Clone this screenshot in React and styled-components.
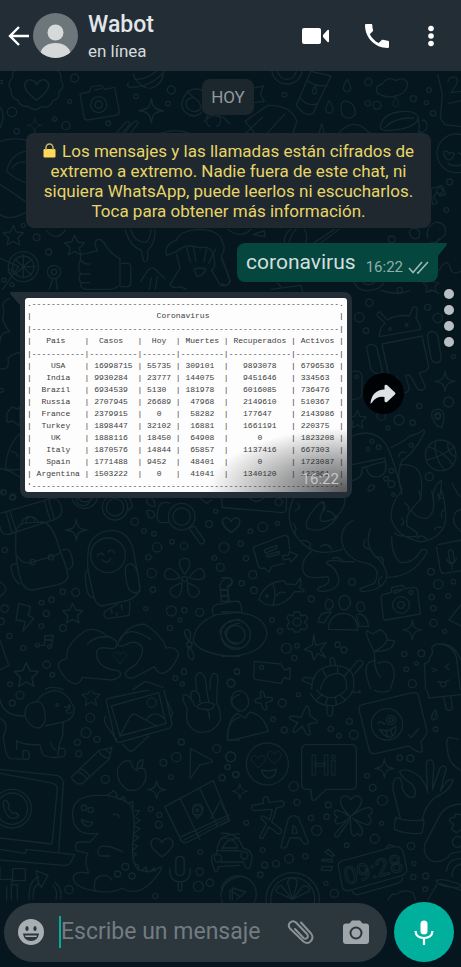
import React from "react";
import styled, { createGlobalStyle } from "styled-components";

const GlobalStyle = createGlobalStyle`
  * { box-sizing: border-box; }
  body { margin: 0; background: #05161e; font-family: Roboto, "Noto Sans", sans-serif; }
  button { border: 0; padding: 0; background: none; color: inherit; font: inherit; cursor: pointer; }
`;

const Page = styled.div`
  position: relative;
  min-height: 100vh;
  display: flex;
  flex-direction: column;
  overflow: hidden;
  background: #05161e;
`;

const Wallpaper = styled.svg`
  position: absolute;
  inset: 0;
  width: 100%;
  height: 100%;
  fill: none;
  stroke: #14272f;
  stroke-width: 4;
  stroke-linecap: round;
  stroke-linejoin: round;
  font-family: Roboto, sans-serif;
`;

const Header = styled.header`
  position: relative;
  display: flex;
  align-items: center;
  height: 71px;
  padding: 0 20px 0 6px;
  background: #222d36;
  color: #ffffff;
`;

const IconButton = styled.button`
  display: flex;
  align-items: center;
  justify-content: center;
  flex: none;
  width: ${(p) => p.$width}px;
  height: 40px;
  color: ${(p) => p.$color || "#ffffff"};
`;

const Avatar = styled.svg`
  flex: none;
  width: 45px;
  height: 45px;
  margin: 0 10px 0 3px;
`;

const Contact = styled.div`
  flex: 1;
  min-width: 0;
  padding-top: 3px;
`;

const Name = styled.h1`
  margin: 0;
  color: #e3e6e8;
  font-size: 23px;
  line-height: 28px;
  font-weight: 500;
`;

const Status = styled.p`
  margin: 0;
  color: #d5dadd;
  font-size: 17px;
  line-height: 24px;
`;

const HeaderActions = styled.div`
  display: flex;
  align-items: center;
  gap: 32px;
`;

const Chat = styled.main`
  position: relative;
  flex: 1;
  display: flex;
  flex-direction: column;
  padding: 8px 7px 0 11px;
`;

const DatePill = styled.div`
  align-self: center;
  margin-right: 9px;
  padding: 8px 9px;
  border-radius: 8px;
  background: #1c272d;
  color: #919a9f;
  font-size: 17px;
  line-height: 20px;
`;

const Notice = styled.p`
  margin: 18px 23px 0 15px;
  padding: 8px 14px 7px;
  border-radius: 8px;
  background: #1e282e;
  color: #e8d568;
  font-size: 17px;
  line-height: 20px;
  text-align: center;
`;

const LockIcon = styled.svg`
  width: 13px;
  height: 15px;
  margin-right: 2px;
  vertical-align: -1px;
`;

const SentBubble = styled.div`
  position: relative;
  align-self: flex-end;
  display: flex;
  align-items: flex-end;
  gap: 10px;
  margin: 15px 16px 0 0;
  padding: 5px 9px 6px;
  border-radius: 8px 0 8px 8px;
  background: #05473f;
  color: #d3dfdd;
  font-size: 21px;
  line-height: 28px;
`;

const SentTail = styled.svg`
  position: absolute;
  top: 0;
  left: 100%;
  width: 9px;
  height: 13px;
`;

const Meta = styled.span`
  display: flex;
  align-items: center;
  gap: 5px;
  color: #8fafaa;
  font-size: 15px;
  line-height: 18px;
`;

const MediaRow = styled.div`
  display: flex;
  align-items: flex-start;
  margin-top: 7px;
`;

const MediaBubble = styled.div`
  position: relative;
  flex: none;
  margin: 3px 0 0 9px;
  padding: 6px 5px;
  border-radius: 0 8px 8px 8px;
  background: #222d36;
`;

const ReceivedTail = styled.svg`
  position: absolute;
  top: 0;
  right: 100%;
  width: 10px;
  height: 13px;
`;

const Sheet = styled.div`
  position: relative;
  padding: 0 3px 0 2px;
  border-radius: 3px;
  background: #fdfdfd;
  overflow: hidden;

  &::after {
    content: "";
    position: absolute;
    inset: 0;
    background: radial-gradient(ellipse 140px 64px at 100% 100%, rgba(30, 32, 34, 0.75), rgba(30, 32, 34, 0.4) 50%, rgba(30, 32, 34, 0));
  }
`;

const Report = styled.table`
  border-collapse: collapse;
  color: #3c3c3c;
  font-family: "Liberation Mono", monospace;
  font-size: 8px;
  line-height: 12px;
  white-space: pre;

  th, td {
    padding: 0;
    height: 12px;
    font-weight: 400;
    text-align: left;
  }
`;

const RuleCell = styled.td`
  line-height: 13px;
`;

const MediaTime = styled.time`
  position: absolute;
  z-index: 1;
  right: 8px;
  bottom: 3px;
  color: #c4c6c8;
  font-size: 15px;
  line-height: 20px;
`;

const ShareButton = styled.button`
  align-self: center;
  display: flex;
  align-items: center;
  justify-content: center;
  flex: none;
  width: 41px;
  height: 41px;
  margin-left: 11px;
  border-radius: 50%;
  background: #000305;
`;

const DotColumn = styled.div`
  display: flex;
  flex-direction: column;
  gap: 6px;
  margin-left: auto;
`;

const Dot = styled.span`
  width: 10px;
  height: 10px;
  border-radius: 50%;
  background: #b9bec1;
`;

const Composer = styled.form`
  position: relative;
  display: flex;
  align-items: center;
  gap: 7px;
  padding: 0 7px 5px 4px;
`;

const Field = styled.div`
  flex: 1;
  min-width: 0;
  display: flex;
  align-items: center;
  height: 59px;
  padding: 0 17px 0 13px;
  border-radius: 30px;
  background: #2c363d;
`;

const MessageInput = styled.input`
  flex: 1;
  min-width: 0;
  height: 32px;
  margin-left: 14px;
  padding: 0;
  border: 0;
  border-left: 2px solid #0aa897;
  outline: 0;
  background: transparent;
  color: #d5dadd;
  font: 23px/32px Roboto, sans-serif;

  &::placeholder { color: #737c81; opacity: 1; }
`;

const FieldActions = styled.div`
  display: flex;
  gap: 28px;
`;

const MicButton = styled.button`
  display: flex;
  align-items: center;
  justify-content: center;
  flex: none;
  width: 60px;
  height: 60px;
  border-radius: 50%;
  background: #00af9c;
`;

const HEART = "M0 26C-30 4-34-8-28-18C-21-29-6-26 0-12C6-26 21-29 28-18C34-8 30 4 0 26Z";
const STAR = "M0-30L9-10L30-8L14 8L19 29L0 18L-19 29L-14 8L-30-8L-9-10Z";
const SPARK = "M0-32C3-9 9-3 32 0C9 3 3 9 0 32C-3 9-9 3-32 0C-9-3-3-9 0-32Z";
const DROP = "M0-22C10-6 14 2 12 10C8 22-8 22-12 10C-14 2-10-6 0-22Z";
const MIC = "M-12-38Q-12-50 0-50Q12-50 12-38V-8Q12 4 0 4Q-12 4-12-8ZM-30-16Q-30 22 0 22Q30 22 30-16M-5 22V46Q0 50 5 46V22";
const PETAL = "M0-14C-24-46-18-62 0-62C18-62 24-46 0-14";

/* Each tile is drawn on a grid three times finer than the page. */
const tiles = [
  {
    x: 0, y: 68,
    circles: [[36, 132, 14], [224, 30, 12], [209, 100, 6], [164, 153, 6], [198, 173, 12], [50, 190, 8], [325, 166, 7], [408, 85, 7], [514, 66, 12], [504, 107, 7], [296, 110, 24], [296, 110, 11], [110, 508, 10], [146, 552, 9], [70, 596, 45], [70, 596, 32], [162, 612, 20], [162, 612, 8], [30, 610, 6], [12, 636, 6], [36, 650, 6], [3, 42, 5], [70, 472, 6]],
    paths: [
      "M38 28Q18 50 34 66Q30 90 54 96Q60 118 84 114Q102 134 124 116Q150 122 158 98Q180 94 176 72Q198 56 182 36Q188 14 166 4M38 28Q34 10 52 2",
      "M240 78L268 72L274 56L304 52L314 64L344 58L358 132Q356 140 346 142L262 156Q254 156 252 148ZM284 66L304 62",
      "M386 44Q376 52 390 58Q450 58 488 16Q496 6 484 2M400 18Q410 50 440 60M404 34Q440 36 474 6M490 16Q488 50 450 62",
      "M545 110C550 80 566 58 600 64C630 78 620 140 584 144Q550 142 545 110M560 70L580 88Q600 98 604 120Q580 144 560 116Q552 92 580 88",
      "M348 196L378 162Q388 158 390 168L366 196M374 196L402 160Q412 156 414 166L392 196",
      "M480 196Q530 180 570 196M612 160L636 142L670 148L690 168M630 176A22 22 0 1 1 650 176",
      "M0 118Q18 140 0 180M0 220Q40 208 76 216M76 250Q30 260 20 310Q40 330 76 344M0 350Q36 372 76 400M0 440Q30 460 76 434M36 300Q50 280 74 282",
      "M242 574Q236 556 262 556L292 548Q282 530 288 518Q300 508 312 524Q328 556 360 572V650Q350 662 330 664H256Q238 660 244 644Q230 632 242 618Q230 600 242 574ZM242 618H270M244 644H270M242 574Q250 590 270 588M366 586H384Q392 588 392 598V646Q390 656 380 656H362",
      "M376 486Q390 536 424 546L430 578Q436 586 442 576L444 546Q468 524 464 486M392 486Q406 526 440 522Q454 504 452 486",
      "M422 640L444 606Q460 594 470 608L494 632M448 664L454 630M466 664L472 626",
      "M500 562Q490 530 530 516Q540 488 596 484Q660 486 666 520Q680 540 664 564L690 640Q680 660 660 650L634 606Q650 600 640 560Q630 530 600 540Q560 524 530 550L500 562M530 560L540 600L510 650Q520 664 540 656L560 664M560 540L572 584M580 536L588 580M620 540L612 580M646 544L626 586M582 604Q600 596 618 604Q606 628 590 624Z",
      "M0 570L56 596L8 664M70 596V560M70 596L96 572M70 596L106 596M70 596L94 622M70 596V630M70 596L44 620M70 596L44 572M148 664L158 634M172 664L168 634",
      "M140 488Q170 524 196 486",
    ],
    marks: [[HEART, 110, 65, 1.2], [SPARK, 104, 172, 0.7], [SPARK, 454, 128, 1.15], [STAR, 40, 502, 1], [STAR, 224, 532, 1]],
  },
  {
    x: 221, y: 68,
    circles: [[190, 80, 7], [442, 42, 11], [440, 106, 8], [468, 112, 12], [577, 92, 9], [636, 136, 8], [624, 66, 7], [616, 104, 6], [198, 6, 28], [198, 2, 46], [686, 342, 9], [656, 368, 9], [676, 426, 7], [512, 514, 10], [536, 666, 8], [706, 256, 58]],
    paths: [
      "M98 60L128 54L118 78L130 100L98 104",
      "M270 10L330 24L276 136Q250 148 226 112ZM262 40Q290 58 318 52M240 92Q260 116 286 108M282 54Q268 72 278 78Q294 76 282 54",
      "M470 76Q458 54 484 48Q500 22 526 38Q552 24 560 48Q556 78 524 84Q500 92 470 76",
      "M360 120Q358 96 380 100Q406 110 402 140Q384 160 364 142Z",
      "M100 194L72 160L140 112Q210 110 228 160L216 196M74 196L124 148M138 196L190 140",
      "M352 196Q400 142 446 196M294 196L302 166L310 196",
      "M478 180Q480 142 530 132Q584 124 592 148Q590 170 546 182Q490 194 478 180ZM492 178Q520 148 578 150M592 150L596 194M604 156Q620 156 618 180Q606 200 590 190",
      "M650 20L664 78L658 150L672 170L720 176M680 42Q684 24 706 28Q716 40 690 74L720 70M720 98L684 106",
      "M668 252Q680 244 684 258Q692 248 700 258Q696 276 680 276Q668 266 668 252M712 252L720 260M680 286Q700 298 720 290",
      "M630 362L662 352L674 378L656 384L648 372L638 388L650 404L634 410Z",
      "M190 524Q190 494 210 484M204 524Q210 500 226 484M254 524Q262 500 250 484M280 524L340 484M300 524L354 484M20 484Q60 514 90 484M96 500L130 488L132 506Z",
      "M566 500Q560 484 582 480Q602 486 594 508Q580 520 566 500M620 510Q612 476 646 462Q680 466 672 500Q650 526 630 524M646 526L654 510",
      "M654 608Q680 560 690 608Q700 620 720 610",
      "M150 664L240 652L246 672M170 646L180 656M400 644Q410 668 440 668Q480 664 488 644M428 644Q440 656 460 644",
      "M0 570Q16 600 28 640Q20 660 0 646",
    ],
    marks: [[DROP, 378, 54, 0.9], [DROP, 325, 118, 0.9], [DROP, 524, 104, 0.7], [STAR, 630, 650, 0.8]],
  },
  {
    x: 0, y: 285,
    circles: [[4, 316, 6], [10, 622, 8], [38, 636, 9], [250, 640, 22]],
    paths: [
      "M30 40Q0 50 12 80Q0 110 30 140Q0 140 0 170M0 250Q30 260 24 220Q44 200 68 204",
      "M20 386L36 366L54 372L60 364V424L38 408L22 412Z",
      "M66 440Q20 480 16 550Q36 560 66 550M0 550L32 560L66 580M34 500Q50 500 54 516",
    ],
    marks: [],
  },
  {
    x: 340, y: 290,
    circles: [[88, 38, 11], [58, 82, 14], [78, 122, 8], [263, 52, 9], [293, 84, 14], [150, 117, 4], [200, 105, 4], [238, 348, 8], [177, 390, 15], [218, 398, 8], [144, 414, 6], [124, 378, 13], [326, 336, 15], [293, 380, 8], [302, 496, 46], [268, 560, 12], [96, 454, 6], [116, 472, 7], [84, 478, 5], [154, 542, 7], [138, 566, 7], [154, 582, 10], [214, 466, 6], [160, 614, 5], [340, 200, 6], [50, 260, 5]],
    paths: [
      "M118 140Q120 108 136 100L112 78Q108 66 120 66L142 90Q172 72 208 78L218 54Q228 46 232 58L228 86Q240 98 242 118ZM126 162L246 138L266 228Q266 240 254 244L238 248L256 290Q250 306 234 298L208 254L196 256L208 294Q204 312 188 306L172 262L148 264Z",
      "M80 174Q84 160 100 164Q110 168 112 180L128 246Q118 256 104 248Q94 244 92 236ZM262 136Q266 122 280 124Q290 128 294 140L304 204Q300 220 286 218Q274 214 272 200Z",
      "M38 244Q64 240 66 256V314Q62 328 38 328",
      "M292 408Q270 382 276 366Q288 352 306 362Q318 378 306 412ZM284 376A9 9 0 1 0 302 376A9 9 0 1 0 284 376",
      "M262 470Q310 480 340 526M258 510Q300 502 344 470M286 454Q280 500 312 538M324 454Q318 488 346 500",
      "M36 438Q100 412 136 460Q160 500 186 612M36 524L134 504L136 516Q144 550 118 560Q84 566 78 530L66 534Q70 564 36 572M80 530L134 514M84 594Q90 580 104 588Q100 602 86 604Z",
      "M154 472Q190 456 210 438Q240 430 250 420Q258 424 250 434Q220 492 186 512Q166 560 186 600M176 500Q180 480 198 488M180 524Q240 520 244 570Q248 600 240 630",
      "M280 630Q276 590 304 570Q306 600 296 630M336 580Q350 610 361 620",
      "M120 0Q180 20 210 0M260 6L280 2L296 10",
    ],
    marks: [[SPARK, 315, 274, 0.95], [STAR, 52, 388, 0.9]],
  },
  {
    x: 0, y: 490,
    circles: [[12, 6, 7], [37, 22, 7], [14, 180, 8], [227, 307, 12], [188, 305, 8], [155, 329, 8], [125, 338, 7], [139, 371, 9], [124, 408, 7], [189, 414, 10], [14, 356, 11], [3, 394, 10], [28, 438, 8], [70, 474, 8], [140, 524, 11], [157, 554, 7], [30, 583, 7], [404, 95, 11], [432, 123, 7], [462, 131, 7], [471, 172, 14], [445, 202, 8], [455, 249, 14], [459, 299, 8], [516, 155, 7], [552, 168, 11], [437, 356, 6], [514, 363, 15], [553, 361, 8], [599, 367, 12], [540, 390, 6], [510, 414, 8], [552, 545, 8], [526, 565, 7], [547, 582, 6], [627, 102, 10], [647, 64, 6], [672, 172, 15], [643, 204, 7], [661, 232, 12], [711, 545, 8], [693, 579, 12], [345, 52, 38], [345, 52, 26], [545, 80, 40], [545, 80, 26], [324, 196, 52], [254, 16, 39], [256, 10, 26], [554, 267, 8], [98, 216, 8], [153, 202, 8]],
    paths: [
      "M0 70L132 32Q176 12 184 52Q192 78 164 88L30 132Q4 138 0 110M18 66L36 128M30 64L48 120M134 34L150 88M146 28L162 84",
      "M48 130Q50 98 86 98L130 96Q160 104 180 182Q204 240 204 262Q196 278 174 284L98 300Q72 300 62 270Q42 200 48 130ZM52 198Q66 222 90 218L156 200Q180 192 182 182M66 98A26 26 0 0 1 114 94M78 96A13 13 0 0 1 104 92M48 222Q30 220 34 240Q40 272 60 282M188 180Q208 174 212 190Q222 216 216 230L206 238",
      "M264 244Q260 190 270 160Q290 120 344 122Q392 130 402 190L420 290Q416 326 370 334L304 348Q286 344 280 314ZM292 198Q302 182 312 196M324 186Q334 174 344 188M306 208Q322 226 332 206M376 238Q376 220 394 222Q412 228 416 268L420 304Q406 314 388 300Q376 276 376 238M266 242Q254 240 256 262Q258 300 268 318L280 324M354 342L314 364Q308 382 322 386L388 376L390 336M334 352L336 370M364 344L366 358M350 376V368",
      "M448 20Q468 30 464 50Q440 50 440 28M440 62Q464 58 464 78Q444 96 440 62M510 40Q480 30 474 58Q464 96 486 98L506 98M568 116L600 160Q612 166 614 152L584 110Q574 106 568 116",
      "M56 340L92 350L84 376L102 384L68 424L76 394L48 390ZM118 466A6 5 0 1 1 106 466A6 5 0 1 1 118 466L134 466L134 438L160 436L154 470A6 5 0 1 1 142 470A6 5 0 1 1 154 470M134 450H158",
      "M350 466Q354 448 324 440Q278 402 246 430Q196 466 200 506Q168 514 176 534Q200 580 228 582Q244 576 246 562L336 570Q362 564 362 552Q360 540 340 540Q290 530 290 490Q290 470 320 474Q348 480 350 466ZM262 462Q290 434 334 442M354 466Q354 448 372 432Q390 404 434 402Q490 440 498 474Q530 468 536 494Q514 548 484 550Q470 546 464 530L400 564Q376 566 376 550Q380 540 408 524Q436 484 424 468Q404 448 378 464Q358 472 354 466ZM360 452Q380 400 452 448",
      "M660 286Q664 272 678 264Q692 262 696 272Q696 284 682 288L688 334H664ZM664 300H682M666 316H684M640 374Q630 350 650 344L700 334H720M580 456Q580 400 650 374L720 366M580 456Q610 498 720 500M660 424Q664 396 720 388M720 474Q670 478 660 424M674 426Q690 400 720 400M720 460Q680 460 674 426M568 456Q544 424 560 418Q578 420 568 456M568 470Q556 500 576 510Q590 502 568 470M576 464A8 8 0 1 1 560 464A8 8 0 1 1 576 464",
      "M0 450L26 526L0 540M590 598Q580 550 600 548Q616 548 620 598M630 598Q630 550 644 550Q660 552 650 598M400 598L436 574L490 592M136 598Q150 586 190 598",
      "M372 20L390 26L398 50L384 62M600 24L620 40L634 30M664 22L668 52L720 58M0 276Q34 296 0 320",
    ],
    marks: [[SPARK, 229, 120, 1], [STAR, 218, 370, 1], [STAR, 79, 554, 1.2], [HEART, 360, 502, 0.65], [HEART, 694, 104, 0.85]],
    petals: [554, 267],
  },
  {
    x: 221, y: 490,
    circles: [[173, 36, 11], [125, 111, 14], [88, 124, 7], [169, 100, 6], [59, 161, 8], [75, 205, 8], [95, 254, 12], [62, 280, 8], [99, 301, 10], [393, 276, 10], [271, 327, 9], [228, 396, 12], [196, 475, 15], [228, 467, 7], [220, 504, 8], [153, 389, 7], [177, 423, 8], [350, 464, 8], [369, 480, 9], [48, 545, 8], [30, 580, 11], [630, 245, 10], [652, 283, 14], [697, 275, 7], [682, 318, 7], [632, 322, 8], [637, 355, 8], [638, 399, 11], [671, 424, 6], [550, 492, 8], [601, 490, 10], [586, 520, 6], [556, 538, 7], [574, 581, 12], [122, 532, 6], [570, 307, 6], [540, 345, 25], [540, 345, 10], [44, 434, 44], [44, 434, 28], [138, 318, 3]],
    paths: [
      "M0 52L184 68Q196 66 196 54V24M86 24Q104 44 130 24",
      "M218 24Q190 80 220 130Q270 210 364 178M258 114Q246 90 296 40Q320 24 304 66Q280 110 340 86Q380 50 370 14M258 114Q310 136 350 80M396 90Q360 110 362 150Q370 210 440 220Q484 236 460 280L418 296Q416 306 430 304Q490 300 498 258Q494 220 460 196Q430 160 448 116M272 184Q230 220 252 254Q270 268 320 260Q336 280 296 292Q280 300 300 304Q350 304 354 270Q346 230 318 222Q312 210 340 212L400 216M240 154Q250 146 268 160L266 178M298 170Q320 154 332 178M334 206Q350 196 368 216M432 150Q420 170 444 178M470 200Q490 200 486 222M230 40Q244 56 222 62M216 100Q232 112 220 130M300 36Q322 48 304 66M318 64Q336 62 344 84M484 260Q466 268 476 286",
      "M542 2Q510 40 510 80Q520 140 600 156Q680 140 674 70Q670 20 660 0M632 2Q650 60 620 84Q590 90 570 60L600 26L594 2M570 60Q550 84 560 110Q600 130 586 140Q530 140 522 130M512 140Q512 200 540 218Q580 220 600 180Q620 174 618 186Q580 260 500 262M552 40Q566 46 562 60M540 84Q556 92 542 106M590 144Q600 130 618 148M640 120Q642 108 660 112M670 60Q656 64 664 84M650 10Q652 24 662 26",
      "M100 170L190 136Q200 136 202 144L206 178M100 170Q94 176 100 186L112 228Q116 238 130 234L144 246L152 230L190 220M130 180L168 166L166 176L132 190ZM136 196L174 184L174 192L140 202ZM206 184L230 196L210 216L206 206L188 210L184 196L202 196Z",
      "M114 328Q124 290 164 276L188 272L196 282L224 284L238 264L240 284L234 292L250 300L246 306L222 304Q196 344 156 346Q130 346 114 328ZM156 280Q168 314 156 344M166 318Q176 302 192 308",
      "M322 418Q324 374 364 370Q408 370 410 420ZM354 338Q354 316 372 316Q390 318 388 344Q378 362 366 360Q354 354 354 338M312 344Q314 328 326 328Q340 334 336 350Q326 364 316 356ZM406 348Q410 334 422 336Q434 344 430 358Q420 370 410 360ZM292 396Q294 364 330 366L310 398ZM412 372Q440 374 442 410L414 408L406 376",
      "M480 316L512 306L512 292L544 286L554 296L578 292Q588 292 590 302L598 372L494 390Q486 388 486 380ZM518 304Q530 296 546 300L520 310Z",
      "M202 374L216 378L220 366H236L240 378L254 374L260 386L250 396L260 408L252 420L240 416L234 426H220L216 416L202 418L198 406L206 396L198 384Z",
      "M0 366Q130 360 138 430Q130 500 0 500M0 334L50 334Q62 338 62 364M0 264Q34 258 34 278Q30 290 20 288L22 332M0 300H20M0 318H20",
      "M278 434L284 466L316 458L298 480L314 502L290 490L278 510L272 486L250 478L274 466Z",
      "M100 514L180 522L190 540L208 534L206 570L190 562L180 580L102 568Q96 566 98 556Z",
      "M460 484Q430 430 438 422L456 432L476 418Q500 430 498 450L520 452Q520 484 460 484Q490 470 498 450M460 484L462 530M470 520Q520 500 520 560L508 596M464 512Q430 510 436 556L448 596M462 524Q466 550 480 562",
      "M652 164L720 150M646 170L658 240Q660 250 670 250L720 242M682 184Q688 174 696 184L700 214Q692 224 686 214ZM676 206Q692 238 706 206M694 226V238M700 80Q690 100 720 124M700 74Q706 60 720 60",
      "M272 598L274 574Q286 530 340 526Q400 530 398 574V598M298 598Q310 550 350 550Q380 554 376 598M272 584L244 572Q244 562 254 562L280 566M328 528V506Q336 498 340 510L344 526M388 538L408 514Q428 506 426 522L400 552M306 540L316 562M350 528V550M384 542L370 558",
      "M614 598L610 520Q626 520 626 502Q640 490 632 476Q634 464 650 462Q690 460 706 500L718 598M632 534L648 540L634 546M684 522L672 530L684 538M650 574Q670 580 684 570M656 576Q660 596 674 588L676 574M664 462Q700 464 720 510M684 390L720 344M684 390L720 408",
    ],
    marks: [[SPARK, 574, 420, 0.9], [HEART, 30, 106, 0.9]],
  },
  {
    x: 0, y: 690,
    circles: [[60, 16, 12], [37, 39, 9], [271, 83, 13], [258, 128, 15], [232, 157, 9], [291, 148, 9], [236, 191, 9], [316, 268, 12], [455, 38, 14], [172, 45, 4], [544, 156, 9], [529, 201, 14], [490, 218, 10], [513, 261, 7], [650, 176, 12], [692, 200, 15], [683, 231, 8], [708, 253, 9], [666, 263, 9], [452, 357, 7], [478, 375, 8], [476, 404, 10], [592, 361, 14], [592, 361, 4], [601, 486, 7], [599, 545, 11], [630, 578, 11], [595, 589, 15], [654, 505, 11], [376, 530, 10], [396, 558, 9], [353, 552, 9], [207, 599, 12], [466, 618, 8], [36, 356, 58], [36, 356, 47], [252, 353, 8], [272, 360, 8]],
    paths: [
      "M0 84Q30 100 10 140Q16 200 30 206L84 208Q94 196 82 182L68 182L70 202M50 178V152Q70 166 120 164L126 190Q142 208 190 200Q202 190 192 176L176 174L174 196M152 156Q154 174 168 180M176 172L188 136L190 98M76 78Q70 40 110 34Q136 36 136 90Q126 120 104 112Q80 100 76 78M110 34Q126 8 160 2Q200 0 222 54Q226 90 180 98L136 108M0 30Q10 80 76 78M194 50Q204 56 208 44Q214 54 198 62Q202 76 216 66",
      "M320 38Q314 28 330 24L474-6Q490-8 494 8L516 102Q514 114 504 116L362 156Q350 160 346 150ZM334 48L476 8L498 100L360 138ZM360 138L388 84Q400 62 418 80L470 108M440 88Q464 56 492 86M318 78Q306 90 324 112L350 150M368 162L384 180Q394 188 404 178L446 138M498 26L518 70L512 82",
      "M562 56Q540 20 554 14Q570 14 586 50M574 22Q568 4 582 2Q600 2 600 36M562 56Q550 110 594 126Q640 134 662 90Q660 50 650 40L652 0M596 44Q620 30 644 44Q640 66 600 56Q586 54 596 44M612 56Q630 60 628 86M620 0L626 34M720 14Q690 20 696 44L720 66M720 82Q680 90 682 150H720",
      "M214 262L296 182L336 172L328 206L248 280Q230 288 214 262ZM296 182Q302 200 328 206M232 244Q250 250 260 266M240 236Q258 242 268 258M316 178L330 190",
      "M392 214Q370 206 354 234Q344 272 382 300Q410 306 428 286Q446 262 432 236Q414 230 410 242Q396 234 392 214M412 236Q410 212 428 208Q432 224 420 236",
      "M572 176L636 210Q640 214 632 218L600 224L574 262Q568 270 570 258ZM494 350L640 272L688 390L560 458Q546 460 542 448ZM544 440L688 374M552 450L684 384M600 298L654 410M540 324L600 450M632 386L660 334M592 385Q570 362 582 346Q600 336 608 352Q612 366 592 385",
      "M0 238L170 256Q188 260 190 280L176 486M0 250L150 278Q172 282 172 296L156 462L0 444M0 478L76 490L78 478L224 494L210 520Q206 526 190 526L0 510M10 342Q10 326 20 332L28 346L24 354L38 370Q52 366 56 378Q44 390 28 382Q12 366 10 342",
      "M218 376Q214 318 290 316H320Q376 326 390 344Q408 370 400 440Q390 530 420 540Q450 552 478 532Q490 528 480 544Q440 604 400 604Q380 604 366 594Q340 612 280 602Q216 590 220 560Q230 540 266 550Q250 510 264 490L230 482Q220 458 238 456H270L294 430Q220 440 218 376ZM244 388Q260 398 278 396Q276 410 262 408Q246 404 244 388M340 374Q354 368 358 382M368 486Q330 464 300 470Q286 488 300 498H330M286 604Q274 560 310 556Q330 556 334 570M322 316L340 302Q354 310 350 326M356 328L372 320L378 336M384 340L398 334L400 354M404 362L418 362L408 378M408 384L420 390L406 402M406 410L420 416L404 428M404 436L416 442L402 454M400 462L412 468L400 480M396 486L410 492L398 502M402 520L416 526L414 540M426 542L438 530L442 546M450 546L462 534L466 544",
      "M720 432Q680 430 660 450Q650 470 650 490Q630 492 636 516L644 544Q652 550 656 530L720 526M652 482H720M668 476Q674 446 720 444M662 620Q666 570 720 560M690 600V630M690 600L720 620",
      "M38 536H76V572H38ZM0 530V568H36V584H52V628M34 584V630M108 542L144 556L124 592L116 580Q96 590 100 628M116 580L108 542M88 628Q84 570 118 560M158 586Q174 600 168 628M164 578Q188 592 182 628M20 590V630",
    ],
    marks: [[STAR, 273, 20, 0.9], [SPARK, 470, 299, 0.85], [HEART, 486, 472, 1.1], [MIC, 540, 552, 1.05], [SPARK, 716, 304, 0.5]],
  },
  {
    x: 221, y: 690,
    circles: [[232, 14, 6], [184, 39, 12], [156, 88, 7], [190, 120, 9], [139, 222, 63], [29, 201, 15], [20, 231, 8], [44, 254, 9], [3, 263, 9], [218, 289, 14], [228, 337, 9], [76, 398, 7], [270, 384, 8], [287, 421, 15], [322, 345, 9], [317, 380, 8], [329, 117, 8], [385, 94, 9], [354, 137, 7], [398, 134, 13], [438, 257, 7], [455, 293, 10], [484, 331, 15], [482, 400, 6], [461, 446, 13], [377, 466, 7], [570, 468, 11], [579, 521, 6], [577, 561, 8], [614, 558, 9], [613, 598, 7], [536, 203, 8], [568, 205, 10], [644, 118, 7], [125, 480, 7], [131, 525, 9], [165, 521, 10], [204, 506, 13], [253, 499, 8], [118, 554, 8], [70, 496, 11], [315, 580, 6], [340, 610, 12], [498, 103, 47], [510, 90, 14], [510, 90, 6], [215, 628, 80], [215, 628, 66], [52, 612, 54], [710, 456, 16]],
    paths: [
      "M30 30Q34 2 58 2Q86 10 82 44Q70 68 54 62Q34 52 30 30M20 148Q20 90 48 70L72 84L86 66Q130 74 142 124L26 152ZM118 4Q128-2 132 22L150 22Q160 30 148 34L134 38L138 56Q130 64 124 52L120 40L104 38Q98 28 110 26L120 24Z",
      "M256 48Q266 46 266 76L288 92Q292 102 276 98L262 104L268 132Q262 140 254 128L244 108L222 128Q212 128 220 112L230 98L208 88Q200 80 214 78L240 82Z",
      "M268 10Q290 52 340 46Q380 36 396 2M286 0Q310 28 340 22Q370 10 376-4M318 48V72Q326 84 334 74L336 48M288 28L304 12M314 42L320 24M346 44L344 24M372 30L358 16M390 6L418 8L412-4M458 0Q480 12 506 2",
      "M414 58Q412 48 424 44L574 8Q588 6 592 16L618 124Q618 136 600 154L604 182Q600 190 588 184L562 168L466 190Q452 194 446 184ZM470 100Q480 90 492 104M476 118Q500 130 524 108Q528 134 508 142Q488 140 476 118M496 124L500 142M510 122L514 138M562 134L572 142L588 120M574 138L594 116",
      "M254 164H394Q406 166 406 178V286Q404 298 394 298H316L282 330Q274 334 272 324L270 298H254Q242 296 242 286V176Q244 166 254 164Z",
      "M122 240Q144 246 166 238Q162 264 142 264Q126 260 122 240",
      "M94 346L128 340L126 326Q134 314 142 326L144 338L182 332Q196 338 184 350L166 354Q160 380 152 396L180 418Q184 430 172 432L144 410L126 444Q112 448 118 436L136 402L120 384Q122 372 134 382L146 390L154 358L100 362Q86 358 94 346ZM180 470L202 386Q214 370 232 382L262 456Q258 466 248 460L236 444H206L198 468Q186 480 180 470ZM214 430L216 406Q226 410 228 430Z",
      "M388 380Q346 340 364 320Q380 312 390 330Q400 308 420 324Q430 342 388 380Q444 340 452 358Q458 370 442 376Q460 396 440 404Q420 400 394 384Q438 420 418 438L408 430Q394 450 390 420ZM388 380Q340 350 340 368Q340 378 350 380Q334 394 348 402Q370 400 388 380L340 434Q344 446 352 438L388 388",
      "M538 384Q526 340 516 300Q514 264 530 262Q544 264 544 296Q560 330 580 320Q590 300 570 280Q540 262 536 244Q560 230 596 260Q620 290 620 310L616 226Q616 208 630 210Q640 214 638 236L634 300L656 236Q668 220 676 234L658 304Q680 260 696 270Q690 300 640 324Q610 350 604 390M524 382Q560 396 608 390Q610 410 602 430Q560 434 520 418Q520 400 524 382",
      "M352 528Q350 516 366 512L520 470Q538 468 546 484L558 538Q558 550 544 556L384 602Q370 604 364 592ZM496 474Q500 462 514 466L518 470M394 604Q398 616 412 614L530 580Q546 574 544 564M302 512L334 516V508H304ZM312 486L334 500L340 496L322 478ZM300 540L330 542L334 530L304 530Z",
      "M684 142Q672 150 680 180Q680 220 720 242M684 142L712 148M720 342Q680 344 660 370L612 460Q602 500 636 514Q670 520 690 490L720 484M688 396Q680 384 700 382L704 372L720 374M688 396L698 402L692 418L706 428L720 420",
      "M618 0L624 24L720 14M668 22L676 58Q684 66 694 56L690 20M676 544Q680 506 720 506M694 560Q690 530 720 522M646 572Q660 562 720 584Q720 594 700 592Q650 590 646 572M648 584L620 630M656 580L720 600M500 630L514 612Q530 616 536 606Q560 598 576 608L584 630",
      "M0 340L26 392L0 406M0 430Q50 426 66 474Q90 480 94 500L88 530Q80 542 72 528L68 516H0M0 444Q42 440 50 474H0M0 482H60M34 594L74 606L46 630M34 594V630",
      "M215 628L200 580Q200 564 215 564Q230 566 228 582ZM215 628L180 586Q164 592 166 606ZM215 628L246 588Q262 584 266 602ZM644 58Q626 80 634 90Q648 90 644 58",
    ],
    marks: [[SPARK, 57, 304, 0.75], [SPARK, 490, 235, 0.9], [HEART, 112, 214, 0.7], [HEART, 160, 202, 0.7], [DROP, 642, 76, 0.7]],
  },
];

function Doodles() {
  return (
    <Wallpaper viewBox="0 0 461 967" preserveAspectRatio="xMidYMin slice" aria-hidden="true">
      {tiles.map((t, i) => (
        <svg key={i} x={t.x} y={t.y} width="240" height="236" viewBox="0 0 720 708">
          {t.circles.map(([x, y, r], k) => <circle key={k} cx={x} cy={y} r={r} />)}
          {t.paths.map((d, k) => <path key={k} d={d} />)}
          {t.marks.map(([d, x, y, s], k) => <path key={k} d={d} transform={`translate(${x} ${y}) scale(${s})`} />)}
          {t.petals && [0, 72, 144, 216, 288].map((a) => (
            <path key={a} d={PETAL} transform={`translate(${t.petals[0]} ${t.petals[1]}) rotate(${a})`} />
          ))}
        </svg>
      ))}
      <Lettering>
        <text x="310" y="775" fontSize="28" fontWeight="500">Hi</text>
        <text x="346" y="885" fontSize="24" transform="rotate(-14 346 885)">09:28</text>
      </Lettering>
    </Wallpaper>
  );
}

const Lettering = styled.g`
  stroke-width: 1;
`;

const columns = [11, 10, 7, 9, 13, 9];
const headings = ["Pais", "Casos", "Hoy", "Muertes", "Recuperados", "Activos"];
const rows = [
  ["USA", "16998715", "55735", "309101", "9893078", "6796536"],
  ["India", "9930284", "23777", "144075", "9451646", "334563"],
  ["Brazil", "6934539", "5130", "181978", "6016085", "736476"],
  ["Russia", "2707945", "26689", "47968", "2149610", "510367"],
  ["France", "2379915", "0", "58282", "177647", "2143986"],
  ["Turkey", "1898447", "32102", "16881", "1661191", "220375"],
  ["UK", "1888116", "18450", "64908", "0", "1823208"],
  ["Italy", "1870576", "14844", "65857", "1137416", "667303"],
  ["Spain", "1771488", "9452", "48401", "0", "1723087"],
  ["Argentina", "1503222", "0", "41041", "1340120", "122061"],
];

const center = (text, width) => {
  const left = Math.floor((width - text.length) / 2);
  return " ".repeat(left) + text + " ".repeat(width - text.length - left);
};
const cell = (text, i) => "|" + center(text, columns[i]) + (i === columns.length - 1 ? "|" : "");

function CovidReport() {
  const rule = "-".repeat(64);
  return (
    <Report>
      <thead>
        <tr><td colSpan={6}>{"." + rule + "."}</td></tr>
        <tr><th colSpan={6}>{"|" + center("Coronavirus", 64) + "|"}</th></tr>
        <tr><RuleCell colSpan={6}>{"|" + rule + "|"}</RuleCell></tr>
        <tr>{headings.map((h, i) => <th key={h} scope="col">{cell(h, i)}</th>)}</tr>
        <tr><RuleCell colSpan={6}>{"|" + columns.map((n) => "-".repeat(n)).join("|") + "|"}</RuleCell></tr>
      </thead>
      <tbody>
        {rows.map((r) => (
          <tr key={r[0]}>{r.map((v, i) => <td key={i}>{cell(v, i)}</td>)}</tr>
        ))}
        <tr><td colSpan={6}>{"'" + rule + "'"}</td></tr>
      </tbody>
    </Report>
  );
}

export default function App() {
  return (
    <Page>
      <GlobalStyle />
      <Doodles />
      <Header>
        <IconButton $width={24} type="button" aria-label="Atrás">
          <svg width="22" height="22" viewBox="0 0 22 22" fill="none" stroke="currentColor" strokeWidth="2.4">
            <path d="M22 11H3M12 2L3 11L12 20" />
          </svg>
        </IconButton>
        <Avatar viewBox="0 0 45 45" aria-hidden="true">
          <clipPath id="face"><circle cx="22.5" cy="22.5" r="22.5" /></clipPath>
          <g clipPath="url(#face)">
            <rect width="45" height="45" fill="#6c767b" />
            <circle cx="22.5" cy="19.5" r="8" fill="#d6d9da" />
            <ellipse cx="22.5" cy="41" rx="15" ry="11" fill="#d6d9da" />
          </g>
        </Avatar>
        <Contact>
          <Name>Wabot</Name>
          <Status>en línea</Status>
        </Contact>
        <HeaderActions>
          <IconButton $width={35} type="button" aria-label="Videollamada">
            <svg width="27" height="18" viewBox="0 0 27 18" fill="currentColor">
              <rect x="0" y="1" width="19" height="16" rx="2" />
              <path d="M21 8L25.500 3Q27 2 27 4V14Q27 16 25.500 15L21 10Z" />
            </svg>
          </IconButton>
          <IconButton $width={24} type="button" aria-label="Llamar">
            <svg width="24" height="24" viewBox="3 3 18 18" fill="currentColor">
              <path d="M20 15.5c-1.2 0-2.4-.2-3.6-.6-.3-.1-.7 0-1 .2l-2.200 2.200c-2.800-1.400-5.100-3.800-6.600-6.600l2.200-2.200c.3-.3.4-.7.2-1-.3-1.100-.5-2.300-.5-3.500 0-.6-.4-1-1-1H4c-.6 0-1 .4-1 1 0 9.400 7.600 17 17 17 .6 0 1-.4 1-1v-3.500c0-.6-.4-1-1-1z" />
            </svg>
          </IconButton>
          <IconButton $width={20} type="button" aria-label="Más opciones">
            <svg width="6" height="22" viewBox="0 0 6 22" fill="currentColor">
              <circle cx="3" cy="3.500" r="2.800" /><circle cx="3" cy="11" r="2.800" /><circle cx="3" cy="18.500" r="2.800" />
            </svg>
          </IconButton>
        </HeaderActions>
      </Header>

      <Chat>
        <DatePill>HOY</DatePill>
        <Notice>
          <LockIcon viewBox="0 0 13 15" aria-hidden="true">
            <rect x="0.500" y="6" width="12" height="8.500" rx="1" fill="#ffd95a" />
            <path d="M3 7V4.500a3.500 3.500 0 0 1 7 0V7" fill="none" stroke="#c9b766" strokeWidth="1.500" />
          </LockIcon>{" "}
          Los mensajes y las llamadas están cifrados de extremo a extremo. Nadie fuera de este chat, ni siquiera WhatsApp, puede leerlos ni escucharlos. Toca para obtener más información.
        </Notice>

        <SentBubble>
          coronavirus
          <Meta>
            16:22
            <svg width="21" height="13" viewBox="0 0 21 13" fill="none" stroke="#a2bbb7" strokeWidth="1.500">
              <path d="M1 7L5 11.500L14 1M9 11.500L10 12L20 1" />
            </svg>
          </Meta>
          <SentTail viewBox="0 0 9 13" aria-hidden="true">
            <path d="M0 0H8Q10 1 8 3L0 13Z" fill="#05473f" />
          </SentTail>
        </SentBubble>

        <MediaRow>
          <MediaBubble>
            <ReceivedTail viewBox="0 0 10 13" aria-hidden="true">
              <path d="M10 0H1Q-1 1 1 3L10 13Z" fill="#222d36" />
            </ReceivedTail>
            <Sheet>
              <CovidReport />
              <MediaTime>16:22</MediaTime>
            </Sheet>
          </MediaBubble>
          <ShareButton type="button" aria-label="Reenviar">
            <svg width="26" height="20" viewBox="0 0 26 20" fill="#dfe2e3">
              <path d="M0.500 19Q2 6 14.500 5.500V2Q15 0 17 1L25 8.500Q26 9.500 25 10.500L17 18Q15 19 14.500 17V13Q6 12 2 18.500Q0.500 20 0.500 19Z" />
            </svg>
          </ShareButton>
          <DotColumn aria-hidden="true"><Dot /><Dot /><Dot /><Dot /></DotColumn>
        </MediaRow>
      </Chat>

      <Composer onSubmit={(e) => e.preventDefault()}>
        <Field>
          <IconButton $width={28} $color="#a8afb3" type="button" aria-label="Emojis">
            <svg width="26" height="26" viewBox="0 0 26 26">
              <circle cx="13" cy="13" r="13" fill="currentColor" />
              <g fill="#2c363d">
                <ellipse cx="9" cy="9.500" rx="1.600" ry="2.600" /><ellipse cx="17" cy="9.500" rx="1.600" ry="2.600" />
                <path d="M5 14.500H21Q20 22 13 22Q6 22 5 14.500Z" />
              </g>
              <path d="M7 16.500H19L18.500 18H7.500Z" fill="currentColor" />
            </svg>
          </IconButton>
          <MessageInput type="text" placeholder="Escribe un mensaje" aria-label="Escribe un mensaje" />
          <FieldActions>
            <IconButton $width={28} $color="#899297" type="button" aria-label="Adjuntar">
              <svg width="27" height="25" viewBox="0 0 27 25" fill="none" stroke="currentColor" strokeWidth="2" strokeLinecap="round">
                <path d="M14 2.500L24 13.500C28 18.500 22 26 16.500 21.500L3 8.500C-0.500 4 5 -1 9 2.500L20 14C22.500 17.500 19 20 16.500 18L8 9" />
              </svg>
            </IconButton>
            <IconButton $width={28} $color="#a0a7ab" type="button" aria-label="Cámara">
              <svg width="26" height="24" viewBox="0 0 26 24">
                <path d="M3 3.500H6.500L9 0.500H17L19.500 3.500H23Q26 3.500 26 6.500V21Q26 24 23 24H3Q0 24 0 21V6.500Q0 3.500 3 3.500Z" fill="currentColor" />
                <circle cx="13" cy="13" r="5.500" fill="none" stroke="#2c363d" strokeWidth="2" />
              </svg>
            </IconButton>
          </FieldActions>
        </Field>
        <MicButton type="button" aria-label="Mensaje de voz">
          <svg width="20" height="27" viewBox="0 0 20 27" fill="none" stroke="#ffffff" strokeWidth="2.200">
            <rect x="6.500" y="1.500" width="7" height="14" rx="3.500" fill="#ffffff" stroke="none" />
            <path d="M1.500 12Q2 19 10 19Q18 19 18.500 12M10 19V26" />
          </svg>
        </MicButton>
      </Composer>
    </Page>
  );
}
